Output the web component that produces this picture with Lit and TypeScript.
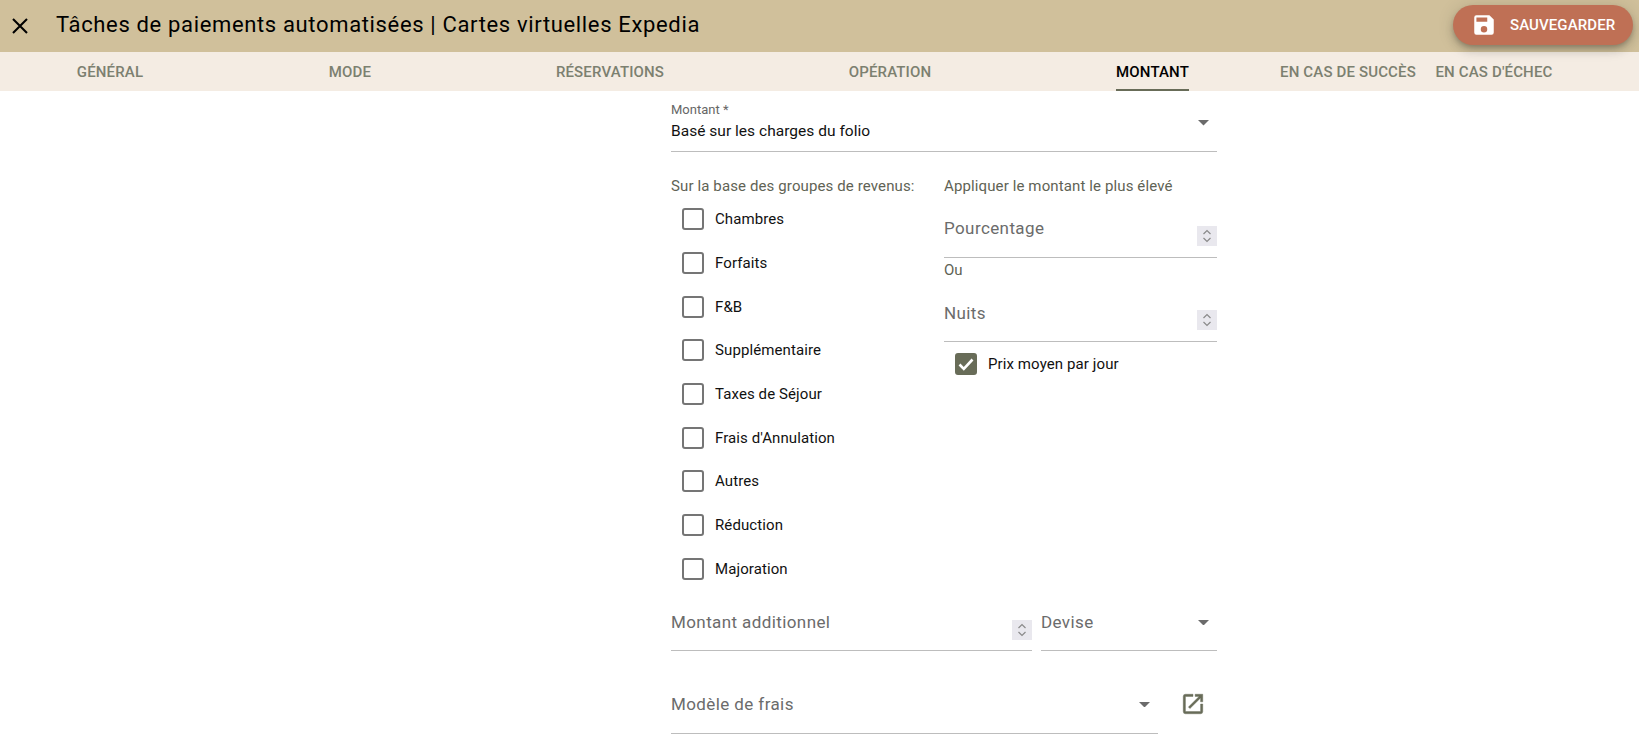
import { LitElement, html, css } from "lit";
import { customElement } from "lit/decorators.js";

const arrow = html`<svg class="arrow" viewBox="0 0 10 5" width="11" height="5.5"><path d="M0 0h10L5 5z" fill="#6b6b6b"/></svg>`;
const spin = html`<span class="spin"><svg viewBox="0 0 10 16" width="10" height="16" fill="none" stroke="#8a8a8a" stroke-width="1.2"><path d="M1.5 6 5 2.5 8.5 6M1.5 10 5 13.5 8.5 10"/></svg></span>`;
const groups = ["Chambres","Forfaits","F&B","Supplémentaire","Taxes de Séjour","Frais d'Annulation","Autres","Réduction","Majoration"];
const tabs: [string, number, boolean?][] = [["GÉNÉRAL",220],["MODE",260],["RÉSERVATIONS",260],["OPÉRATION",300],["MONTANT",225,true],["EN CAS DE SUCCÈS",166],["EN CAS D'ÉCHEC",126]];

@customElement("app-root")
export class AppRoot extends LitElement {
  static styles = css`
    :host { display:block; height:750px; overflow:hidden; background:#fff; font-family:Roboto,"Liberation Sans",sans-serif; color:#000; }
    .bar { height:52px; background:#d0c09b; display:flex; align-items:center; padding:0 6px 0 10px; }
    .close { width:20px; height:20px; display:block; }
    h1 { margin:0 0 0 26px; font-size:22px; font-weight:400; line-height:50px; height:52px; flex:1; letter-spacing:.65px; }
    .save { width:180px; height:40px; border-radius:20px; background:#bf7055; color:#fff; display:flex; align-items:center; box-sizing:border-box; padding-left:18px; gap:13px; font-size:15px; font-weight:500; letter-spacing:.1px; box-shadow:0 3px 5px -1px rgba(0,0,0,.2),0 6px 10px 0 rgba(0,0,0,.14),0 1px 18px 0 rgba(0,0,0,.12); margin-top:-2px; }
    .tabs { height:39px; background:#f4ece3; display:flex; }
    .tab { display:flex; justify-content:center; }
    .tab span { font-size:15px; font-weight:500; color:#7c8070; line-height:40px; height:39px; box-sizing:border-box; letter-spacing:.15px; white-space:nowrap; }
    .tab.on span { color:#000; border-bottom:2px solid #686c58; }
    .form { width:546px; margin-left:671px; display:flex; flex-direction:column; }
    .field { position:relative; border-bottom:1px solid #bdbdbd; box-sizing:border-box; }
    .f0 { height:61px; }
    .f0 .lab { font-size:13px; color:#666; line-height:14px; padding-top:12px; }
    .f0 .val { font-size:15.5px; line-height:20px; margin-top:4px; color:#111; letter-spacing:.03px; }
    .arrow { position:absolute; right:8px; }
    .f0 .arrow { top:29px; }
    .cols { display:flex; margin-top:25px; }
    .left { width:273px; }
    .right { flex:1; min-width:0; }
    .cap { font-size:15px; color:#5f6355; line-height:18px; white-space:nowrap; letter-spacing:.12px; }
    .checks { margin-top:2.5px; display:flex; flex-direction:column; }
    .check { height:43.7px; display:flex; align-items:center; padding-left:11px; font-size:15px; gap:11px; color:#111; letter-spacing:.1px; }
    .box { width:18px; height:18px; border:2px solid #757575; border-radius:3px; flex:none; display:block; }
    .box.on { background:#686c58; border-color:#686c58; position:relative; }
    .box.on svg { position:absolute; left:0; top:0; }
    .ph { font-size:17px; color:#6b6b6b; letter-spacing:.4px; }
    .num { height:63px; padding-top:23px; }
    .num .ph { line-height:20px; display:block; }
    .spin { position:absolute; right:0; top:31px; width:20px; height:20px; background:#e9e8ee; display:flex; align-items:center; justify-content:center; }
    .ou { font-size:15px; color:#5f6355; line-height:16px; margin-top:4px; }
    .n2 { height:64px; padding-top:25px; }
    .n2 .spin { top:32px; }
    .n2 .ph { line-height:20px; display:block; }
    .right .check { height:44px; }
    .row { display:flex; gap:9px; margin-top:11px; }
    .add { width:361px; height:49px; padding-top:10px; }
    .add .spin { top:18px; }
    .dev { flex:1; height:49px; padding-top:10px; }
    .dev .arrow { top:18px; }
    .row2 { display:flex; margin-top:33px; align-items:flex-start; }
    .mod { width:487px; height:50px; padding-top:10px; }
    .mod .arrow { top:18px; }
    .ext { margin-left:22px; margin-top:7px; width:26px; height:26px; display:block; }
    .ext path { fill:#686c58; stroke:#686c58; stroke-width:.4; }
  `;
  render() {
    return html`
      <div class="bar">
        <svg class="close" viewBox="0 0 20 20"><path d="M3 3l14 14M17 3L3 17" stroke="#000" stroke-width="2.1" fill="none"/></svg>
        <h1>Tâches de paiements automatisées | Cartes virtuelles Expedia</h1>
        <div class="save">
          <svg viewBox="0 0 24 24" width="26" height="26"><path fill="#fff" d="M17 3H5a2 2 0 0 0-2 2v14a2 2 0 0 0 2 2h14a2 2 0 0 0 2-2V7l-4-4zm-5 16a3 3 0 1 1 0-6 3 3 0 0 1 0 6zm3-10H5V5h10v4z"/></svg>
          SAUVEGARDER
        </div>
      </div>
      <div class="tabs">
        ${tabs.map(([t,w,on]) => html`<div class="tab ${on?"on":""}" style="width:${w}px"><span>${t}</span></div>`)}
      </div>
      <div class="form">
        <div class="field f0">
          <div class="lab">Montant *</div>
          <div class="val">Basé sur les charges du folio</div>
          ${arrow}
        </div>
        <div class="cols">
          <div class="left">
            <div class="cap">Sur la base des groupes de revenus:</div>
            <div class="checks">
              ${groups.map(g => html`<div class="check"><span class="box"></span>${g}</div>`)}
            </div>
          </div>
          <div class="right">
            <div class="cap">Appliquer le montant le plus élevé</div>
            <div class="field num"><span class="ph">Pourcentage</span>${spin}</div>
            <div class="ou">Ou</div>
            <div class="field n2"><span class="ph">Nuits</span>${spin}</div>
            <div class="check"><span class="box on"><svg viewBox="0 0 18 18" width="18" height="18"><path d="M2.5 9.5l4.3 4.3 8.7-9.3" stroke="#fff" stroke-width="2.6" fill="none"/></svg></span>Prix moyen par jour</div>
          </div>
        </div>
        <div class="row">
          <div class="field add"><span class="ph">Montant additionnel</span>${spin}</div>
          <div class="field dev"><span class="ph">Devise</span>${arrow}</div>
        </div>
        <div class="row2">
          <div class="field mod"><span class="ph">Modèle de frais</span>${arrow}</div>
          <svg class="ext" viewBox="0 0 24 24"><path d="M19 19H5V5h7V3H5a2 2 0 0 0-2 2v14a2 2 0 0 0 2 2h14a2 2 0 0 0 2-2v-7h-2v7zM14 3v2h3.59l-9.83 9.83 1.41 1.41L19 6.41V10h2V3h-7z"/></svg>
        </div>
      </div>
    `;
  }
}
